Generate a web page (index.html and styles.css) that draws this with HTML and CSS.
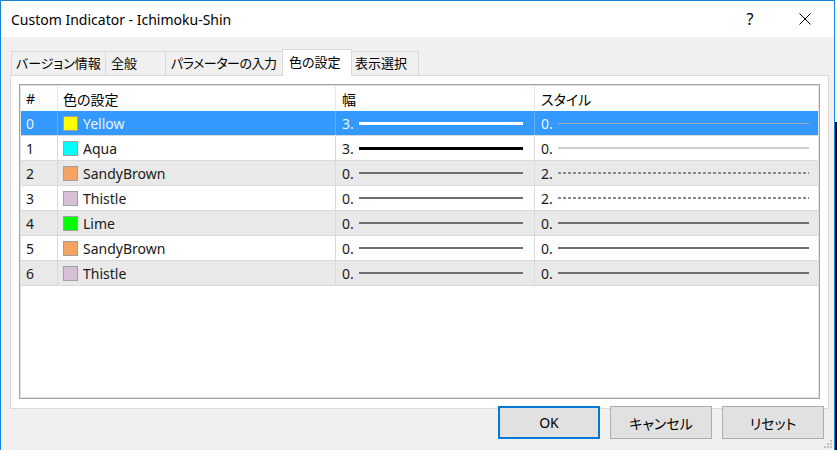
FILE: index.html
```html
<!DOCTYPE html>
<html lang="ja">
<head>
    <meta charset="UTF-8">
    <title>Custom Indicator - Ichimoku-Shin</title>
    <link rel="stylesheet" href="styles.css">
</head>
<body>
    <div class="dialog">
        <div class="titlebar">
            <span class="title">Custom Indicator - Ichimoku-Shin</span>
            <span class="tb-help">?</span>
            <span class="tb-close">
                <svg width="12" height="12" viewBox="0 0 12 12"><path d="M0.5 0.5 L11.5 11.5 M11.5 0.5 L0.5 11.5" stroke="#000" stroke-width="1" fill="none"/></svg>
            </span>
        </div>

        <div class="main">
            <div class="tabs">
                <div class="tab tab-version">バージョン情報</div>
                <div class="tab tab-general">全般</div>
                <div class="tab tab-params">パラメーターの入力</div>
                <div class="tab tab-colors active">色の設定</div>
                <div class="tab tab-show">表示選択</div>
            </div>

            <div class="panel">
                <div class="list">
                    <div class="list-inner">
                        <div class="row head">
                            <div class="cell">#</div>
                            <div class="cell">色の設定</div>
                            <div class="cell wide">幅</div>
                            <div class="cell wide">スタイル</div>
                        </div>

                        <div class="row selected">
                            <div class="cell">0</div>
                            <div class="cell"><span class="swatch c-yellow"></span>Yellow</div>
                            <div class="cell wide"><span class="num">3.</span><span class="line w-line thick-sel"></span></div>
                            <div class="cell wide"><span class="num">0.</span><span class="line s-line thin-sel"></span></div>
                        </div>
                        <div class="row">
                            <div class="cell">1</div>
                            <div class="cell"><span class="swatch c-aqua"></span>Aqua</div>
                            <div class="cell wide"><span class="num">3.</span><span class="line w-line thick"></span></div>
                            <div class="cell wide"><span class="num">0.</span><span class="line s-line thin-light"></span></div>
                        </div>
                        <div class="row alt">
                            <div class="cell">2</div>
                            <div class="cell"><span class="swatch c-sandy"></span>SandyBrown</div>
                            <div class="cell wide"><span class="num">0.</span><span class="line w-line"></span></div>
                            <div class="cell wide"><span class="num">2.</span><span class="line s-line dotted"></span></div>
                        </div>
                        <div class="row">
                            <div class="cell">3</div>
                            <div class="cell"><span class="swatch c-thistle"></span>Thistle</div>
                            <div class="cell wide"><span class="num">0.</span><span class="line w-line"></span></div>
                            <div class="cell wide"><span class="num">2.</span><span class="line s-line dotted"></span></div>
                        </div>
                        <div class="row alt">
                            <div class="cell">4</div>
                            <div class="cell"><span class="swatch c-lime"></span>Lime</div>
                            <div class="cell wide"><span class="num">0.</span><span class="line w-line"></span></div>
                            <div class="cell wide"><span class="num">0.</span><span class="line s-line"></span></div>
                        </div>
                        <div class="row">
                            <div class="cell">5</div>
                            <div class="cell"><span class="swatch c-sandy"></span>SandyBrown</div>
                            <div class="cell wide"><span class="num">0.</span><span class="line w-line"></span></div>
                            <div class="cell wide"><span class="num">0.</span><span class="line s-line"></span></div>
                        </div>
                        <div class="row alt">
                            <div class="cell">6</div>
                            <div class="cell"><span class="swatch c-thistle"></span>Thistle</div>
                            <div class="cell wide"><span class="num">0.</span><span class="line w-line"></span></div>
                            <div class="cell wide"><span class="num">0.</span><span class="line s-line"></span></div>
                        </div>
                    </div>
                </div>
            </div>

            <div class="buttons">
                <div class="btn default">OK</div>
                <div class="btn">キャンセル</div>
                <div class="btn">リセット</div>
            </div>
        </div>

        <svg class="grip" width="8" height="8" viewBox="0 0 8 8">
            <rect x="6" y="0" width="2" height="2" fill="#c2c2c2"/>
            <rect x="3" y="3" width="2" height="2" fill="#c2c2c2"/>
            <rect x="6" y="3" width="2" height="2" fill="#c2c2c2"/>
            <rect x="0" y="6" width="2" height="2" fill="#c2c2c2"/>
            <rect x="3" y="6" width="2" height="2" fill="#c2c2c2"/>
            <rect x="6" y="6" width="2" height="2" fill="#c2c2c2"/>
        </svg>
    </div>
</body>
</html>
```

FILE: styles.css
```css
* {
    box-sizing: border-box;
}
body {
    margin: 0;
    background: linear-gradient(#fff 0, #fff 122px, #000 122px);
    font-family: "Noto Sans", "Noto Sans CJK JP", sans-serif;
    font-size: 14px;
    color: #000;
}
.dialog {
    position: relative;
    width: 835px;
    height: 450px;
    border: 1px solid #1883d7;
    border-bottom: 0;
    background: #f0f0f0;
}

/* title bar */
.titlebar {
    display: flex;
    align-items: center;
    height: 36px;
    padding-left: 10px;
    background: #fff;
}
.title {
    flex: 1;
}
.tb-help {
    width: 14px;
    margin-right: 42px;
    text-align: center;
    font-size: 16px;
}
.tb-close {
    width: 12px;
    height: 12px;
    margin-right: 23px;
    display: flex;
}

/* tabs + panel */
.main {
    padding: 12px 10px 0 9px;
}
.tabs {
    position: relative;
    z-index: 1;
    display: flex;
    align-items: flex-end;
    height: 27px;
    margin-bottom: -1px;
    padding-left: 1px;
    font-size: 13px;
    font-feature-settings: "palt";
}
.tab {
    height: 25px;
    padding-left: 5px;
    line-height: 23px;
    border: 1px solid #d9d9d9;
    background: #f0f0f0;
    white-space: nowrap;
    overflow: hidden;
}
.tab + .tab {
    margin-left: -1px;
}
.tab.active {
    height: 27px;
    line-height: 25px;
    padding-left: 6px;
    border-bottom: 0;
    background: #fff;
}
.tab-version { width: 95px; padding-left: 4px; }
.tab-general { width: 61px; }
.tab-params { width: 118px; letter-spacing: -0.5px; }
.tab-colors { width: 70px; }
.tab-show { width: 68px; padding-left: 3px; }

.panel {
    width: 819px;
    height: 334px;
    padding: 8px;
    border: 1px solid #d9d9d9;
    background: #fff;
}
.list {
    height: 315px;
    border: 1px solid #a3a3a3;
}
.list-inner {
    height: 100%;
    border: 1px solid #e2e2e2;
    background: #fff;
}

/* list rows */
.row {
    display: grid;
    grid-template-columns: 36px 278px 199px 284px;
    height: 25px;
    border-bottom: 1px solid #dadada;
    color: #1a1a1a;
}
.row.head {
    border-bottom: 0;
    color: #000;
    font-feature-settings: "palt";
}
.row.alt {
    background: #e9e9e9;
}
.row.selected {
    background: #3399ff;
    color: #eaf4ff;
}
.cell {
    display: flex;
    align-items: center;
    padding-left: 5px;
    white-space: nowrap;
}
.cell + .cell {
    border-left: 1px solid #dadada;
}
.head .cell + .cell {
    border-left-color: #e6e6e6;
}
.selected .cell + .cell {
    border-left-color: #62b0ff;
}
.cell.wide {
    padding-left: 6px;
}
.swatch {
    width: 15px;
    height: 15px;
    margin-right: 5px;
    border: 1px solid #a0a0a0;
}
.c-yellow { background: #ffff00; }
.c-aqua { background: #00ffff; }
.c-sandy { background: #f4a460; }
.c-thistle { background: #d8bfd8; }
.c-lime { background: #00ff00; }

.num {
    width: 17px;
}
.line {
    height: 2px;
    background: #6e6e6e;
}
.w-line {
    width: 164px;
}
.s-line {
    width: 251px;
}
.line.thick-sel {
    height: 3px;
    background: #fff;
}
.line.thick {
    height: 3px;
    background: #000;
}
.line.thin-sel {
    height: 1px;
    background: #a3acb6;
}
.line.thin-light {
    height: 2px;
    background: #cfcfcf;
}
.line.dotted {
    height: 2px;
    background: repeating-linear-gradient(90deg, #8a8a8a 0 3px, transparent 3px 5px);
}

/* buttons */
.buttons {
    display: flex;
    justify-content: flex-end;
    gap: 10px;
    margin-top: -3px;
    font-feature-settings: "palt";
}
.btn {
    display: flex;
    align-items: center;
    justify-content: center;
    width: 102px;
    height: 33px;
    border: 1px solid #adadad;
    background: #e1e1e1;
}
.btn.default {
    border: 2px solid #0078d7;
}
.grip {
    position: absolute;
    right: 2px;
    bottom: 2px;
}
```
